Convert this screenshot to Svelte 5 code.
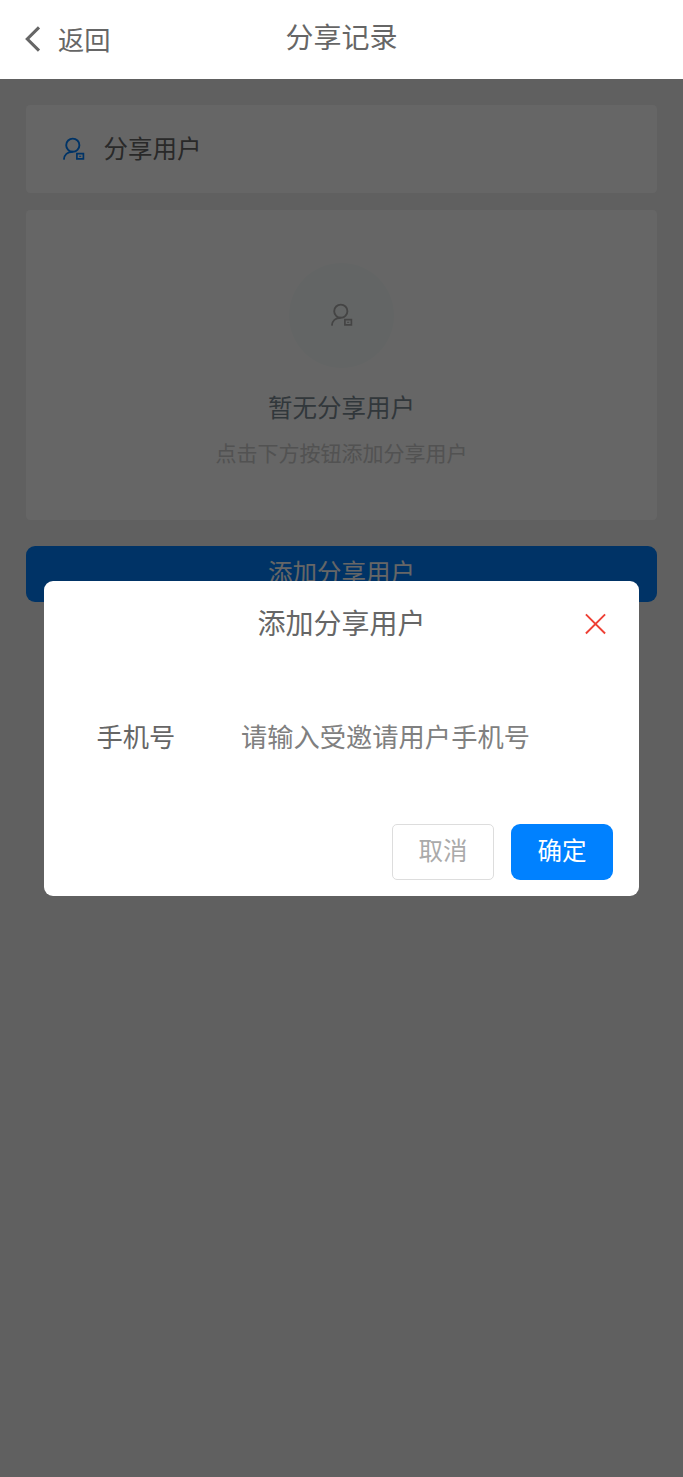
<script>
  let phone = $state('');
</script>

{#snippet userIcon()}
  <svg class="user" viewBox="0 0 24 24" fill="none" stroke="currentColor">
    <circle cx="10.800" cy="8.200" r="6.600" stroke-width="1.900" />
    <path d="M10.800 14.800C5.500 14.800 2.100 18 1.900 22.600" stroke-width="1.900" />
    <path d="M14.900 16.700h6.500v5.100h-6.500z" stroke-width="1.700" />
    <path d="M17.100 19.300h2.100" stroke-width="1" />
  </svg>
{/snippet}

<div class="page">
  <header>
    <div class="back">
      <svg viewBox="0 0 16 28" fill="none" stroke="#666" stroke-width="3.100"><path d="M14 2.400L2.300 14l11.700 11.600" /></svg>
      <span>返回</span>
    </div>
    <h1>分享记录</h1>
  </header>
  <div class="stage">
    <main>
      <section class="heading">
        {@render userIcon()}
        <span>分享用户</span>
      </section>
      <section class="empty">
        <div class="circle">{@render userIcon()}</div>
        <p class="none">暂无分享用户</p>
        <p class="hint">点击下方按钮添加分享用户</p>
      </section>
      <button class="add">添加分享用户</button>
    </main>
    <div class="mask">
      <div class="dialog">
        <div class="top">
          <h2>添加分享用户</h2>
          <svg class="close" viewBox="0 0 22 22" stroke="#ee4035" stroke-width="1.900"><path d="M.9 1.300l19.200 19.200M20.100 1.300L.9 20.500" /></svg>
        </div>
        <div class="field">
          <label for="phone">手机号</label>
          <input id="phone" bind:value={phone} placeholder="请输入受邀请用户手机号" />
        </div>
        <div class="actions">
          <button class="cancel">取消</button>
          <button class="ok">确定</button>
        </div>
      </div>
    </div>
  </div>
</div>

<style>
  :global(body) { margin: 0; }
  .page {
    height: 1477px;
    display: flex;
    flex-direction: column;
    overflow: hidden;
    background: #f1f1f1;
    font-family: "Noto Sans CJK SC", sans-serif;
    color: #666;
  }
  .page * { box-sizing: border-box; }
  h1, h2, p { margin: 0; font-weight: 400; }
  button { font: inherit; margin: 0; padding: 0; border: 0; }
  header {
    height: 79px;
    display: grid;
    grid-template-columns: 1fr auto 1fr;
    background: #fff;
  }
  .back {
    display: flex;
    align-items: center;
    gap: 17px;
    height: 78px;
    padding-left: 25px;
    font-size: 26.270px;
    line-height: 38px;
  }
  .back svg { width: 16px; height: 28px; }
  h1 { font-size: 28px; line-height: 72px; }
  .stage { flex: 1; display: grid; }
  main, .mask { grid-area: 1 / 1; }
  main { padding: 26px 26px 0; }
  .heading {
    height: 88px;
    display: flex;
    align-items: center;
    gap: 17.500px;
    padding: 0 0 2px 36px;
    border-radius: 4.500px;
    background: #fff;
    color: #0081ff;
    font-size: 24.500px;
    line-height: 36px;
  }
  .heading .user { margin-top: 2px; }
  .heading span { color: #666; }
  .user { width: 24px; height: 24px; display: block; flex: none; }
  .empty {
    height: 310px;
    margin-top: 17px;
    padding-top: 53px;
    display: flex;
    flex-direction: column;
    align-items: center;
    border-radius: 4.500px;
    background: #fff;
  }
  .circle {
    width: 105px;
    height: 105px;
    display: grid;
    place-items: center;
    padding: 0 0 1px 1px;
    border-radius: 50%;
    background: #f8fdfc;
    color: #aaa;
  }
  .none { margin-top: 21px; font-size: 24.500px; line-height: 36px; color: #7c8b93; }
  .hint { margin-top: 12px; font-size: 21px; line-height: 30px; color: #ccc; }
  .add {
    width: 100%;
    height: 56px;
    margin-top: 26px;
    padding-bottom: 5px;
    border-radius: 9px;
    background: #0081ff;
    color: #fff;
    font-size: 24.500px;
  }
  .mask {
    display: flex;
    justify-content: center;
    align-items: flex-start;
    padding-top: 502px;
    background: rgba(0, 0, 0, 0.6);
  }
  .dialog {
    width: 595px;
    height: 315px;
    border-radius: 9px;
    background: #fff;
  }
  .top {
    height: 88px;
    display: grid;
    grid-template-columns: 1fr auto 1fr;
    padding-right: 32px;
    padding-left: 32px;
  }
  .top h2 { grid-column: 2; font-size: 28px; line-height: 82px; }
  .close { width: 22px; height: 22px; margin-top: 32px; justify-self: end; }
  .field {
    height: 155px;
    display: flex;
    align-items: center;
    padding: 0 53px 22px 52.500px;
    font-size: 26.270px;
  }
  label { width: 144.500px; line-height: 38px; }
  input {
    flex: 1;
    min-width: 0;
    height: 40px;
    padding: 0;
    border: 0;
    outline: 0;
    background: none;
    font: inherit;
    color: #666;
  }
  input::placeholder { color: #808080; opacity: 1; }
  .actions { display: flex; justify-content: flex-end; gap: 17px; padding-right: 26px; }
  .actions button { width: 102px; height: 56px; padding-bottom: 5px; font-size: 24.500px; }
  .actions .cancel { border: 1px solid #ddd; border-radius: 5px; background: #fff; color: #aaa; }
  .ok { border-radius: 9px; background: #0081ff; color: #fff; }
</style>
